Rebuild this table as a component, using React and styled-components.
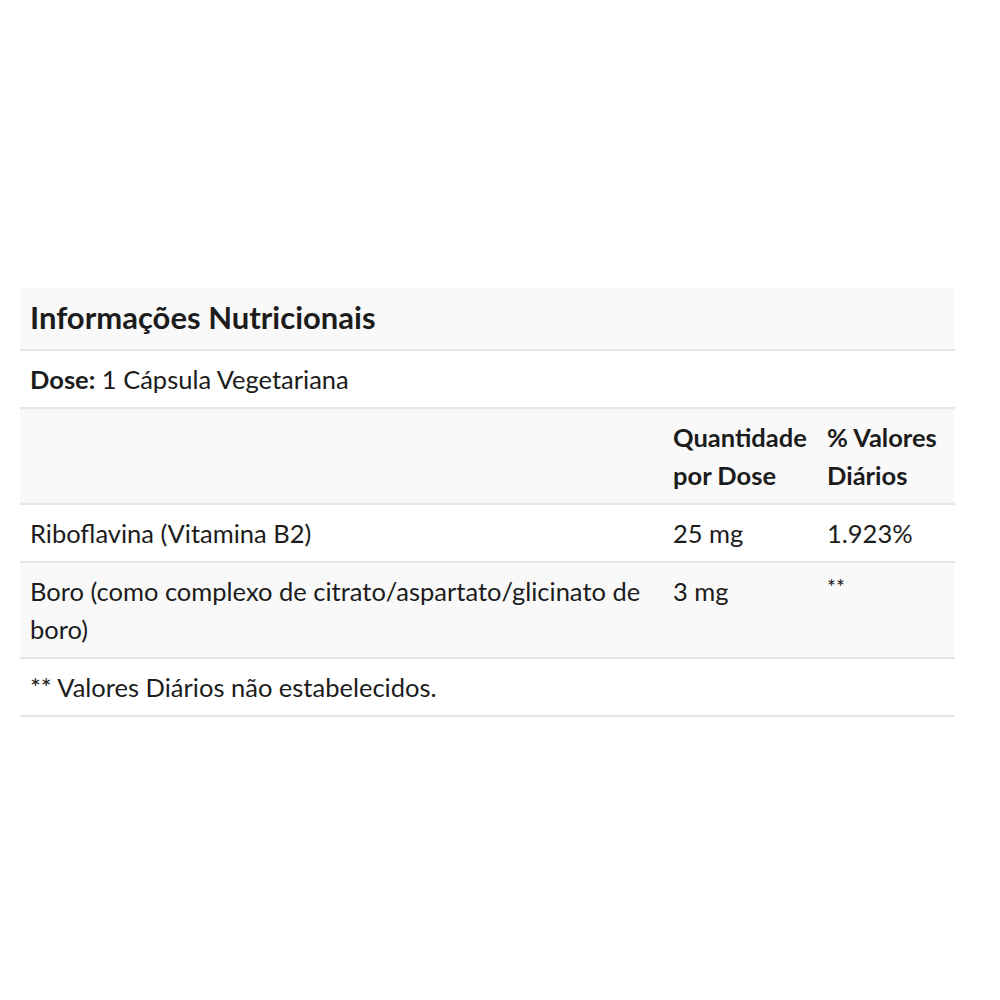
import React from 'react'
import styled, { createGlobalStyle } from 'styled-components'

const GlobalStyle = createGlobalStyle`
    body {
        margin: 0;
        background: #ffffff;
        font-family: Lato, "Noto Sans", sans-serif;
        color: #1c1c1c;
    }
`

const Page = styled.div`
    padding: 288px 45px 0 20px;
`

const Table = styled.table`
    width: 935px;
    border-collapse: collapse;
    font-size: 25.5px;
    line-height: 38px;
`

const Caption = styled.th`
    text-align: left;
    font-size: 31px;
    font-weight: 700;
    padding: 10px 10px 13px;
    background: #f9f9f9;
    border-bottom: 2px solid #e6e6e6;
`

const Row = styled.tr`
    background: ${ ({ shaded }) => (shaded ? '#f9f9f9' : '#ffffff') };
    border-bottom: 2px solid #e6e6e6;
`

const Cell = styled.td`
    padding: 9px 10px;
    vertical-align: top;
    text-align: left;
    font-weight: ${ ({ bold }) => (bold ? 700 : 400) };
    width: ${ ({ w }) => w || 'auto' };
`

const Note = styled.span`
    font-size: 21px;
    vertical-align: top;
    line-height: 30px;
`

const rows = [
    { name: 'Riboflavina (Vitamina B2)', amount: '25 mg', dv: '1.923%' },
    { name: 'Boro (como complexo de citrato/aspartato/glicinato de boro)', amount: '3 mg', dv: '**' },
]

export default function App() {
    return (
        <Page>
            <GlobalStyle />
            <Table>
                <thead>
                    <tr>
                        <Caption colSpan={ 3 }>Informações Nutricionais</Caption>
                    </tr>
                </thead>
                <tbody>
                    <Row>
                        <Cell colSpan={ 3 }><strong>Dose:</strong> 1 Cápsula Vegetariana</Cell>
                    </Row>
                    <Row shaded>
                        <Cell w="623px"></Cell>
                        <Cell bold w="134px">Quantidade por Dose</Cell>
                        <Cell bold>% Valores Diários</Cell>
                    </Row>
                    {
                        rows.map(({ name, amount, dv }, i) => (
                            <Row key={ name } shaded={ i % 2 === 1 }>
                                <Cell>{ name }</Cell>
                                <Cell>{ amount }</Cell>
                                <Cell>{ dv === '**' ? <Note>**</Note> : dv }</Cell>
                            </Row>
                        ))
                    }
                    <Row>
                        <Cell colSpan={ 3 }>** Valores Diários não estabelecidos.</Cell>
                    </Row>
                </tbody>
            </Table>
        </Page>
    )
}
